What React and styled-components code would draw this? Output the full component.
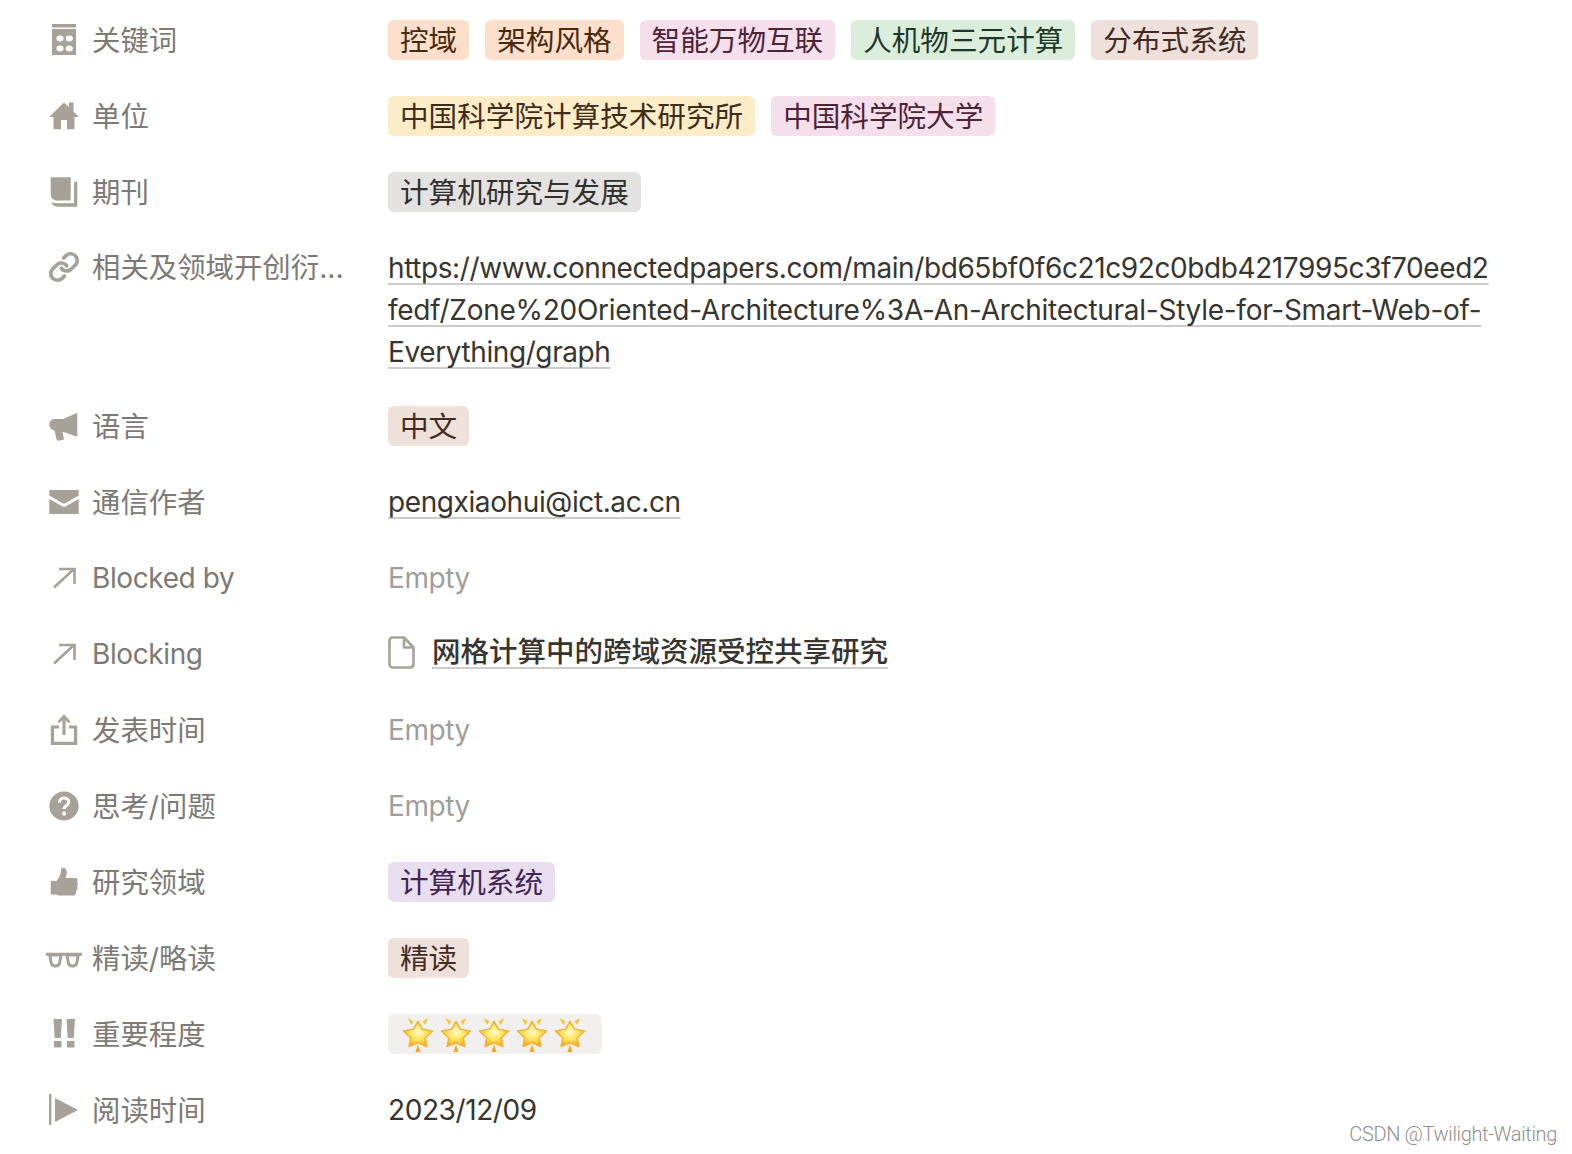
import React from "react";
import styled, { createGlobalStyle } from "styled-components";

const GlobalStyle = createGlobalStyle`
  html, body {
    margin: 0;
    padding: 0;
    background: #fff;
  }
  body {
    font-family: "Inter", "Noto Sans CJK SC", sans-serif;
    color: #37352f;
  }
`;

const Page = styled.div`
  position: relative;
  width: 1572px;
  height: 1154px;
  padding: 2px 0 0 48px;
  box-sizing: border-box;
  overflow: hidden;
`;

const Row = styled.div`
  display: grid;
  grid-template-columns: 340px 1fr;
  align-items: start;
  padding: ${(p) => (p.$tall ? "17px 0 15px" : "18px 0")};
`;

const Label = styled.div`
  display: flex;
  align-items: center;
  gap: 12px;
  height: 40px;
  color: #7d7a75;
  white-space: nowrap;
`;

const LabelText = styled.span`
  margin-bottom: ${(p) => (p.$latin ? "0" : "3px")};
  font-size: ${(p) => (p.$latin ? "28px" : "28.4px")};
  letter-spacing: ${(p) => (p.$latin ? "-0.4px" : "0")};
`;

const IconBox = styled.span`
  display: flex;
  justify-content: center;
  align-items: center;
  flex: none;
  width: 32px;
  height: 32px;

  svg {
    flex: none;
    display: block;
  }
`;

const Value = styled.div`
  display: flex;
  align-items: center;
  gap: 16px;
  min-height: 40px;
  font-size: 28px;
  line-height: 40px;
  letter-spacing: -0.4px;
`;

const Tag = styled.span`
  display: inline-flex;
  align-items: center;
  box-sizing: border-box;
  height: 40px;
  padding: 1px 12px 0;
  border-radius: 6px;
  background: ${(p) => p.$bg};
  color: ${(p) => p.$fg};
  font-size: 28.6px;
  letter-spacing: 0;
  white-space: nowrap;
`;

const Stars = styled(Tag)`
  gap: 2px;
  padding: 0 14px 0 12px;
`;

const Link = styled.a`
  color: #37352f;
  text-decoration: underline;
  text-decoration-color: rgba(55, 53, 47, 0.25);
  text-decoration-thickness: 2px;
  text-decoration-skip-ink: none;
  text-underline-offset: 5px;
`;

const LinkBlock = styled.div`
  line-height: 42px;
`;

const LinkLine = styled.span`
  letter-spacing: ${(p) => p.$spacing || "-0.4px"};
`;

const Empty = styled.span`
  color: #a09e9a;
`;

const PageLink = styled.span`
  display: inline-flex;
  align-items: center;
  gap: 17px;
  margin-top: -4px;
`;

const PageTitle = styled(Link)`
  font-size: 28.5px;
  font-weight: 500;
  letter-spacing: 0;
`;

const Watermark = styled.div`
  position: absolute;
  right: 15px;
  bottom: 8px;
  font-family: "Roboto", "Liberation Sans", sans-serif;
  font-weight: 300;
  font-size: 20px;
  letter-spacing: -0.35px;
  color: #8f8f8f;
`;

const GRAY = "#a6a299";

const Svg = ({ children, w = 32, ...rest }) => (
  <svg width={w} height="32" viewBox={`0 0 ${w} 32`} fill={GRAY} {...rest}>
    {children}
  </svg>
);

const KeyIcon = () => (
  <Svg>
    <rect x="4" y="0" width="24" height="3.5" />
    <rect x="4" y="5" width="24" height="26" />
    <g fill="#fff">
      <ellipse cx="12" cy="14.5" rx="3.6" ry="3" />
      <ellipse cx="21.3" cy="14.5" rx="3.6" ry="3" />
      <ellipse cx="12" cy="24.5" rx="3.6" ry="3" />
      <ellipse cx="21.3" cy="24.5" rx="3.6" ry="3" />
    </g>
  </Svg>
);

const HomeIcon = () => (
  <Svg>
    <path d="M16 2.5 L21 7 V2.5 H25.5 V11.5 L31 17 H26.5 V29.3 H19 V20 H13 V29.3 H5.5 V17 H1 Z" />
  </Svg>
);

const BookIcon = () => (
  <Svg>
    <path d="M2.7 1.3 H22.7 V24.5 H9.5 C5.5 24.5 2.7 22 2.7 18.5 Z" />
    <path d="M26 5.7 H29.3 V30.7 H9.5 C6.5 30.7 4.2 29 3.2 25.8 C5 27 7 27.2 9.5 27.2 H26 Z" />
  </Svg>
);

const LinkIcon = () => (
  <svg width="32" height="32" viewBox="0 0 24 24" fill="none" stroke={GRAY} strokeWidth="2.8" strokeLinecap="round">
    <path d="M10 13a5 5 0 0 0 7.54.54l3-3a5 5 0 0 0-7.07-7.07l-1.72 1.71" />
    <path d="M14 11a5 5 0 0 0-7.54-.54l-3 3a5 5 0 0 0 7.07 7.07l1.71-1.71" />
  </svg>
);

const MegaphoneIcon = () => (
  <Svg>
    <path d="M29.3 2.7 V26.7 L14.5 21.8 L16 29.5 Q11 31.2 8.7 30.2 L6.5 20.5 C3.2 20 1.3 17 1.3 14.5 C1.3 11.5 3.5 9 7 9 H15 Z" />
  </Svg>
);

const MailIcon = () => (
  <Svg>
    <rect x="1.3" y="4" width="29.4" height="24" />
    <path d="M0 10.5 L16 19.5 L32 10.5" fill="none" stroke="#fff" strokeWidth="3" />
  </Svg>
);

const ArrowIcon = () => (
  <Svg fill="none" stroke={GRAY} strokeWidth="2.6">
    <path d="M6 25.5 L26 7" />
    <path d="M11 7 H26.5 V22" />
  </Svg>
);

const ShareIcon = () => (
  <Svg>
    <path d="M16 0.3 L22.5 7.5 L20.5 9.3 L17.6 6.3 V21 H14.4 V6.3 L11.5 9.3 L9.5 7.5 Z" />
    <path d="M11 13 H4.4 V29.4 H27.6 V13 H21" fill="none" stroke={GRAY} strokeWidth="3.2" />
  </Svg>
);

const HelpIcon = () => (
  <Svg>
    <circle cx="16" cy="16" r="14.6" />
    <path d="M11.4 12.8 C11.4 9.8 13.5 8 16.1 8 C18.8 8 20.8 9.8 20.8 12.1 C20.8 15.4 16.1 15.5 16.1 19" fill="none" stroke="#fff" strokeWidth="3.2" />
    <circle cx="16.1" cy="23.6" r="2.1" fill="#fff" />
  </Svg>
);

const ThumbIcon = () => (
  <Svg>
    <path d="M2.7 15 H8 C11 12.5 13 9 13 4 C13 2.4 14 1.7 15.5 1.7 C18 1.7 19.2 5 18.6 8 L17.6 12 H27 C29.5 12 30 14 29 15.7 C30.2 17 30.2 19 29 20.3 C30 22 29.5 24 28 25 C28.6 27 27.5 29.6 25 29.6 H10.5 L8 28.6 H2.7 Z" />
  </Svg>
);

const GlassesIcon = () => (
  <Svg w={36} fill="none" stroke={GRAY} strokeWidth="3">
    <path d="M0 12.3 H36" />
    <path d="M3.8 13 H15 L13.8 20 C13.3 23 11.5 24 9.4 24 C7.3 24 5.5 23 5 20 Z" />
    <path d="M21 13 H32.2 L31 20 C30.5 23 28.7 24 26.6 24 C24.5 24 22.7 23 22.2 20 Z" />
  </Svg>
);

const BangIcon = () => (
  <Svg>
    <path d="M5.5 1 H14 L12.8 20 H6.7 Z" />
    <rect x="6" y="23" width="7.5" height="6.5" />
    <path d="M18.5 1 H27 L25.8 20 H19.7 Z" />
    <rect x="19" y="23" width="7.5" height="6.5" />
  </Svg>
);

const PlayIcon = () => (
  <Svg>
    <rect x="1" y="0" width="2.4" height="31" />
    <path d="M7 4 L30 16 L7 28 Z" />
  </Svg>
);

const DocIcon = () => (
  <svg width="27" height="33" viewBox="0 0 27 33" fill="none" stroke={GRAY} strokeWidth="2.6" strokeLinejoin="round">
    <path d="M5 1.5 H16 L25.5 11.5 V28 C25.5 30.2 24 31.5 22 31.5 H5 C3 31.5 1.5 30.2 1.5 28 V5 C1.5 2.8 3 1.5 5 1.5 Z" />
    <path d="M16 1.5 V11.5 H25.5" />
  </svg>
);

const StarIcon = () => (
  <svg width="36" height="36" viewBox="0 0 36 36">
    <defs>
      <radialGradient id="starFill" cx="0.5" cy="0.42" r="0.6">
        <stop offset="0" stopColor="#fffbd0" />
        <stop offset="0.5" stopColor="#ffe45c" />
        <stop offset="1" stopColor="#f7a51c" />
      </radialGradient>
    </defs>
    <path
      d="M18 5.5 L22.3 13.2 L32.5 15 L25.2 22 L26.8 30.5 L18 26.8 L9.2 30.5 L10.8 22 L3.5 15 L13.7 13.2 Z"
      fill="url(#starFill)"
      stroke="#f5b335"
      strokeWidth="1.6"
      strokeLinejoin="round"
    />
    <path d="M7.7 2.3 L13.7 5 L11 9 Z" fill="#f7c744" />
    <path d="M28.3 2.3 L22.3 5 L25 9 Z" fill="#f7c744" />
    <path d="M18 28.5 L20.5 36 H15.5 Z" fill="#f5a623" />
  </svg>
);

const tones = {
  orange: { $bg: "#fddfcc", $fg: "#49290e" },
  pink: { $bg: "#f4dfeb", $fg: "#4c2337" },
  green: { $bg: "#dbeddb", $fg: "#1c3829" },
  brown: { $bg: "#eee0da", $fg: "#442a1e" },
  yellow: { $bg: "#fdecc8", $fg: "#402c1b" },
  gray: { $bg: "#e3e2e0", $fg: "#32302c" },
  purple: { $bg: "#e8deee", $fg: "#412454" },
  light: { $bg: "#f1f0ef", $fg: "#32302c" },
};

const Prop = ({ icon, label, latin, tall, children }) => (
  <Row $tall={tall}>
    <Label>
      <IconBox>{icon}</IconBox>
      <LabelText $latin={latin}>{label}</LabelText>
    </Label>
    <Value>{children}</Value>
  </Row>
);

const Tags = ({ items }) =>
  items.map(([text, tone]) => (
    <Tag key={text} {...tones[tone]}>
      {text}
    </Tag>
  ));

export default function App() {
  return (
    <Page>
      <GlobalStyle />
      <Prop icon={<KeyIcon />} label="关键词">
        <Tags
          items={[
            ["控域", "orange"],
            ["架构风格", "orange"],
            ["智能万物互联", "pink"],
            ["人机物三元计算", "green"],
            ["分布式系统", "brown"],
          ]}
        />
      </Prop>
      <Prop icon={<HomeIcon />} label="单位">
        <Tags
          items={[
            ["中国科学院计算技术研究所", "yellow"],
            ["中国科学院大学", "pink"],
          ]}
        />
      </Prop>
      <Prop icon={<BookIcon />} label="期刊">
        <Tags items={[["计算机研究与发展", "gray"]]} />
      </Prop>
      <Prop icon={<LinkIcon />} label="相关及领域开创衍..." tall>
        <LinkBlock>
          <Link>
            https://www.connectedpapers.com/main/bd65bf0f6c21c92c0bdb4217995c3f70eed2
            <br />
            <LinkLine $spacing="-0.27px">
              fedf/Zone%20Oriented-Architecture%3A-An-Architectural-Style-for-Smart-Web-of-
            </LinkLine>
            <br />
            Everything/graph
          </Link>
        </LinkBlock>
      </Prop>
      <Prop icon={<MegaphoneIcon />} label="语言">
        <Tags items={[["中文", "brown"]]} />
      </Prop>
      <Prop icon={<MailIcon />} label="通信作者">
        <Link>pengxiaohui@ict.ac.cn</Link>
      </Prop>
      <Prop icon={<ArrowIcon />} label="Blocked by" latin>
        <Empty>Empty</Empty>
      </Prop>
      <Prop icon={<ArrowIcon />} label="Blocking" latin>
        <PageLink>
          <DocIcon />
          <PageTitle>网格计算中的跨域资源受控共享研究</PageTitle>
        </PageLink>
      </Prop>
      <Prop icon={<ShareIcon />} label="发表时间">
        <Empty>Empty</Empty>
      </Prop>
      <Prop icon={<HelpIcon />} label="思考/问题">
        <Empty>Empty</Empty>
      </Prop>
      <Prop icon={<ThumbIcon />} label="研究领域">
        <Tags items={[["计算机系统", "purple"]]} />
      </Prop>
      <Prop icon={<GlassesIcon />} label="精读/略读">
        <Tags items={[["精读", "brown"]]} />
      </Prop>
      <Prop icon={<BangIcon />} label="重要程度">
        <Stars {...tones.light}>
          {[0, 1, 2, 3, 4].map((i) => (
            <StarIcon key={i} />
          ))}
        </Stars>
      </Prop>
      <Prop icon={<PlayIcon />} label="阅读时间">
        2023/12/09
      </Prop>
      <Watermark>CSDN @Twilight-Waiting</Watermark>
    </Page>
  );
}
